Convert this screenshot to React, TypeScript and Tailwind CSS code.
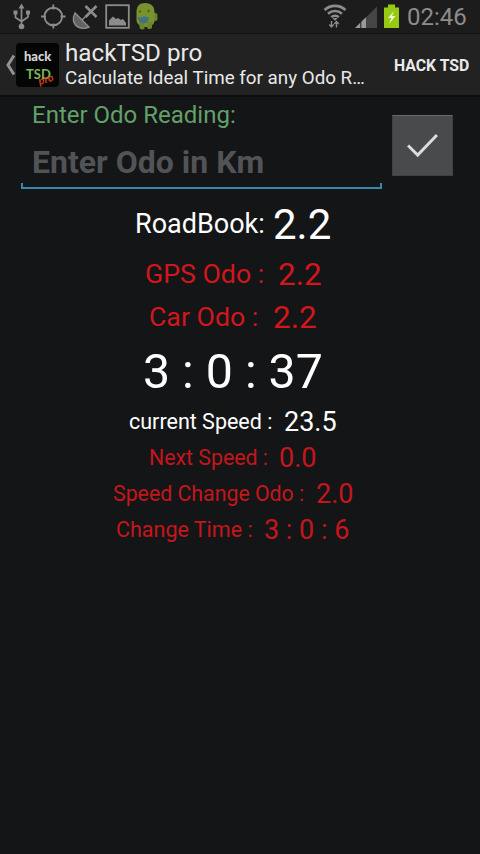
import clsx from 'clsx';

type Reading = {
  label: string;
  value: string;
  row: string;
  labelClass: string;
  valueClass: string;
};

const READINGS: Reading[] = [
  {
    label: 'RoadBook:',
    value: '2.2',
    row: 'h-[62px] pl-[135px] text-white',
    labelClass: 'w-[138px] text-[27px]',
    valueClass: 'pt-[2px] text-[42px]',
  },
  {
    label: 'GPS Odo :',
    value: '2.2',
    row: 'h-[38px] pl-[145px] text-[#d2161b]',
    labelClass: 'w-[133px] text-[26.700px]',
    valueClass: 'pt-[2px] text-[31.500px]',
  },
  {
    label: 'Car Odo :',
    value: '2.2',
    row: 'h-[48px] pl-[149px] text-[#d2161b]',
    labelClass: 'w-[124px] text-[26.700px]',
    valueClass: 'pt-[2px] text-[31.500px]',
  },
];

const SPEEDS: Reading[] = [
  {
    label: 'current Speed :',
    value: '23.5',
    row: 'text-white pl-[129px]',
    labelClass: 'w-[155px] text-[21.500px]',
    valueClass: 'text-[27px]',
  },
  {
    label: 'Next Speed :',
    value: '0.0',
    row: 'text-[#c4161c] pl-[149px]',
    labelClass: 'w-[130px] text-[21.300px]',
    valueClass: 'text-[27px]',
  },
  {
    label: 'Speed Change Odo :',
    value: '2.0',
    row: 'text-[#c4161c] pl-[113px]',
    labelClass: 'w-[203px] text-[21.300px]',
    valueClass: 'text-[27px]',
  },
  {
    label: 'Change Time :',
    value: '3 : 0 : 6',
    row: 'text-[#c4161c] pl-[116px]',
    labelClass: 'w-[148px] text-[21.500px]',
    valueClass: 'text-[27px]',
  },
];

function ReadingRow({ reading, className }: { reading: Reading; className?: string }) {
  return (
    <div className={clsx('flex items-center leading-none whitespace-nowrap', className, reading.row)}>
      <span className={clsx('shrink-0', reading.labelClass)}>{reading.label}</span>
      <span className={reading.valueClass}>{reading.value}</span>
    </div>
  );
}

function StatusBar() {
  return (
    <div className="flex h-[34px] items-center bg-[#1c1c1c] border-b border-[#151112] text-[#8c8c8c]">
      {/* Notifications */}
      <svg className="h-[33px] w-[170px]" viewBox="0 0 170 33" fill="none" stroke="currentColor">
        {/* USB */}
        <path d="M21.500 6v20M15.500 13v4.500l6 4M28 12v5l-6.500 4.500" strokeWidth="1.700" />
        <path d="M21.500 3.500l3 5h-6zM13.500 10.500h4v4h-4zM26 10.500h4v4h-4z" fill="currentColor" stroke="none" />
        <circle cx="21.500" cy="26.500" r="2.800" fill="currentColor" stroke="none" />
        {/* GPS */}
        <circle cx="53.300" cy="16.500" r="8.800" strokeWidth="1.900" />
        <path d="M53.300 4.500v5M53.300 23.500v5M41 16.500h5M60.500 16.500h5" strokeWidth="1.900" />
        {/* Dish */}
        <path d="M75 13c-3 5-2 11 3 14 4 2 8 1.500 11 0z" fill="#626262" strokeWidth="1.400" />
        <path d="M82 20l4-4" strokeWidth="1.500" />
        <path d="M85.500 6l11 11M96.500 6l-11 11" strokeWidth="2.600" />
        {/* Gallery */}
        <rect x="106.200" y="5.200" width="22.600" height="22.600" strokeWidth="1.800" />
        <path d="M109 25.500v-5l4-4 3 2.500 2-1 3 2 2-1 3 4v2.500z" fill="currentColor" stroke="none" />
        {/* Droid */}
        <g stroke="none">
          <rect x="153" y="13" width="4.500" height="8" rx="2" fill="#66802c" />
          <path d="M136.500 12c0-6 3-9 8.500-9s9.500 3 9.500 9v8c0 4-3 7-8.500 7s-9.500-3-9.500-7z" fill="#78932e" />
          <path d="M139.500 22h5v7c-3 1-5 0-5-2zM147 22h5v6c-2 2-5 1-5-1z" fill="#6b872a" />
          <circle cx="140" cy="11.500" r="1.200" fill="#4d631f" />
          <circle cx="148.500" cy="11" r="1.200" fill="#4d631f" />
          <path d="M138 17c3 1 4 0 6-.8l5 1.300c0 3-2 6-5.500 6s-5.500-3-5.500-6.500z" fill="#456f87" />
        </g>
      </svg>
      <svg className="ml-auto h-[33px] w-[84px]" viewBox="320 0 84 33" fill="none" stroke="currentColor">
        {/* Wi-Fi */}
        <path d="M324.500 10c6-5.500 15-5.500 21 0M328 13.700c4-3.600 10-3.600 14 0M331.300 17.200c2-2 5.500-2 7.500 0" strokeWidth="2.600" />
        <path d="M332.500 18h5l-2.500 3z" fill="currentColor" stroke="none" />
        <path d="M331.500 21v6M329.300 24.500l2.200 2.500 2.200-2.500M336.500 27.500v-6M334.300 24l2.200-2.500 2.200 2.500" strokeWidth="1.400" />
        {/* Signal */}
        <path d="M355 28L377 6.500V28z" fill="#454545" stroke="none" />
        <path d="M355 28l5-5v5zM361.500 28v-6.400l4.500-4.400V28z" fill="#999" stroke="none" />
        {/* Battery */}
        <path d="M384 7.500h4V4.500h7v3h4V28h-15z" fill="#98ca13" stroke="none" />
        <path d="M394 11l-6 7h3.500L389 24l6.500-8H392z" fill="#eef7d5" stroke="none" />
      </svg>
      <span className="w-[76px] pl-[3px] text-[24px] leading-none">02:46</span>
    </div>
  );
}

function AppIcon() {
  return (
    <svg className="h-[44px] w-[43px] overflow-visible" viewBox="0 0 43 44">
      <rect width="43" height="44" rx="4" fill="#040505" />
      <text x="8" y="18" className="font-[Lato,sans-serif] text-[13px] font-black" fill="#d6d6d6">
        hack
      </text>
      <text x="10" y="36" className="font-[Lato,sans-serif] text-[13px] font-bold" fill="#7cba55">
        TSD
      </text>
      <text x="23.500" y="42" transform="rotate(-17 23.500 42)" className="font-[Lato,sans-serif] text-[11px] font-bold italic" fill="#d23c1d">
        pro
      </text>
    </svg>
  );
}

function ActionBar() {
  return (
    <div className="flex h-[63px] items-center bg-[#222222] border-b-2 border-[#0d0d0e] text-[#e9e9e9]">
      <svg className="ml-[5px] h-[22px] w-[11px]" viewBox="0 0 11 22" fill="none" stroke="#939393" strokeWidth="3">
        <path d="M9 1.500L3 11l6 9.500" />
      </svg>
      <AppIcon />
      <div className="ml-[6px] w-[304px] whitespace-nowrap">
        <h1 className="text-[24.200px] leading-[27px]">hackTSD pro</h1>
        <p className="text-[18.800px] leading-[23px]">Calculate Ideal Time for any Odo R…</p>
      </div>
      <button className="ml-[25px] pt-[2px] text-[15.800px] leading-none font-bold whitespace-nowrap">HACK TSD</button>
    </div>
  );
}

export default function App() {
  return (
    <div className="h-[854px] w-[480px] overflow-hidden bg-[#141517] font-['Roboto',sans-serif]">
      <StatusBar />
      <ActionBar />

      {/* Odo entry */}
      <div className="flex h-[96px] pl-[21px]">
        <div className="w-[361px]">
          <label className="block h-[36px] pl-[11px] text-[24px] leading-[36px] text-[#62a168]">Enter Odo Reading:</label>
          <div className="flex h-[50px] items-end pb-[5px] pl-[11px] text-[32px] leading-none font-bold text-[#525356]">
            Enter Odo in Km
          </div>
          <div className="h-[6px] border-x-2 border-b-2 border-[#3988ad]" />
        </div>
        <button className="mt-[18px] ml-[10px] flex h-[61px] w-[61px] items-center justify-center border border-[#404143] border-t-[#66676a] bg-[#494a4c]">
          <svg className="h-[25px] w-[33px]" viewBox="0 0 34 26" fill="none" stroke="#dcdcdc" strokeWidth="3">
            <path d="M2 13l10 10L32 2" />
          </svg>
        </button>
      </div>

      {/* Distances */}
      {READINGS.map(r => (
        <ReadingRow key={r.label} reading={r} />
      ))}

      {/* Ideal time */}
      <div className="flex h-[63px] items-center pl-[143px] text-[48.300px] leading-none whitespace-nowrap text-white">3 : 0 : 37</div>

      {/* Speeds */}
      {SPEEDS.map(r => (
        <ReadingRow key={r.label} reading={r} className="h-[36px]" />
      ))}
    </div>
  );
}
